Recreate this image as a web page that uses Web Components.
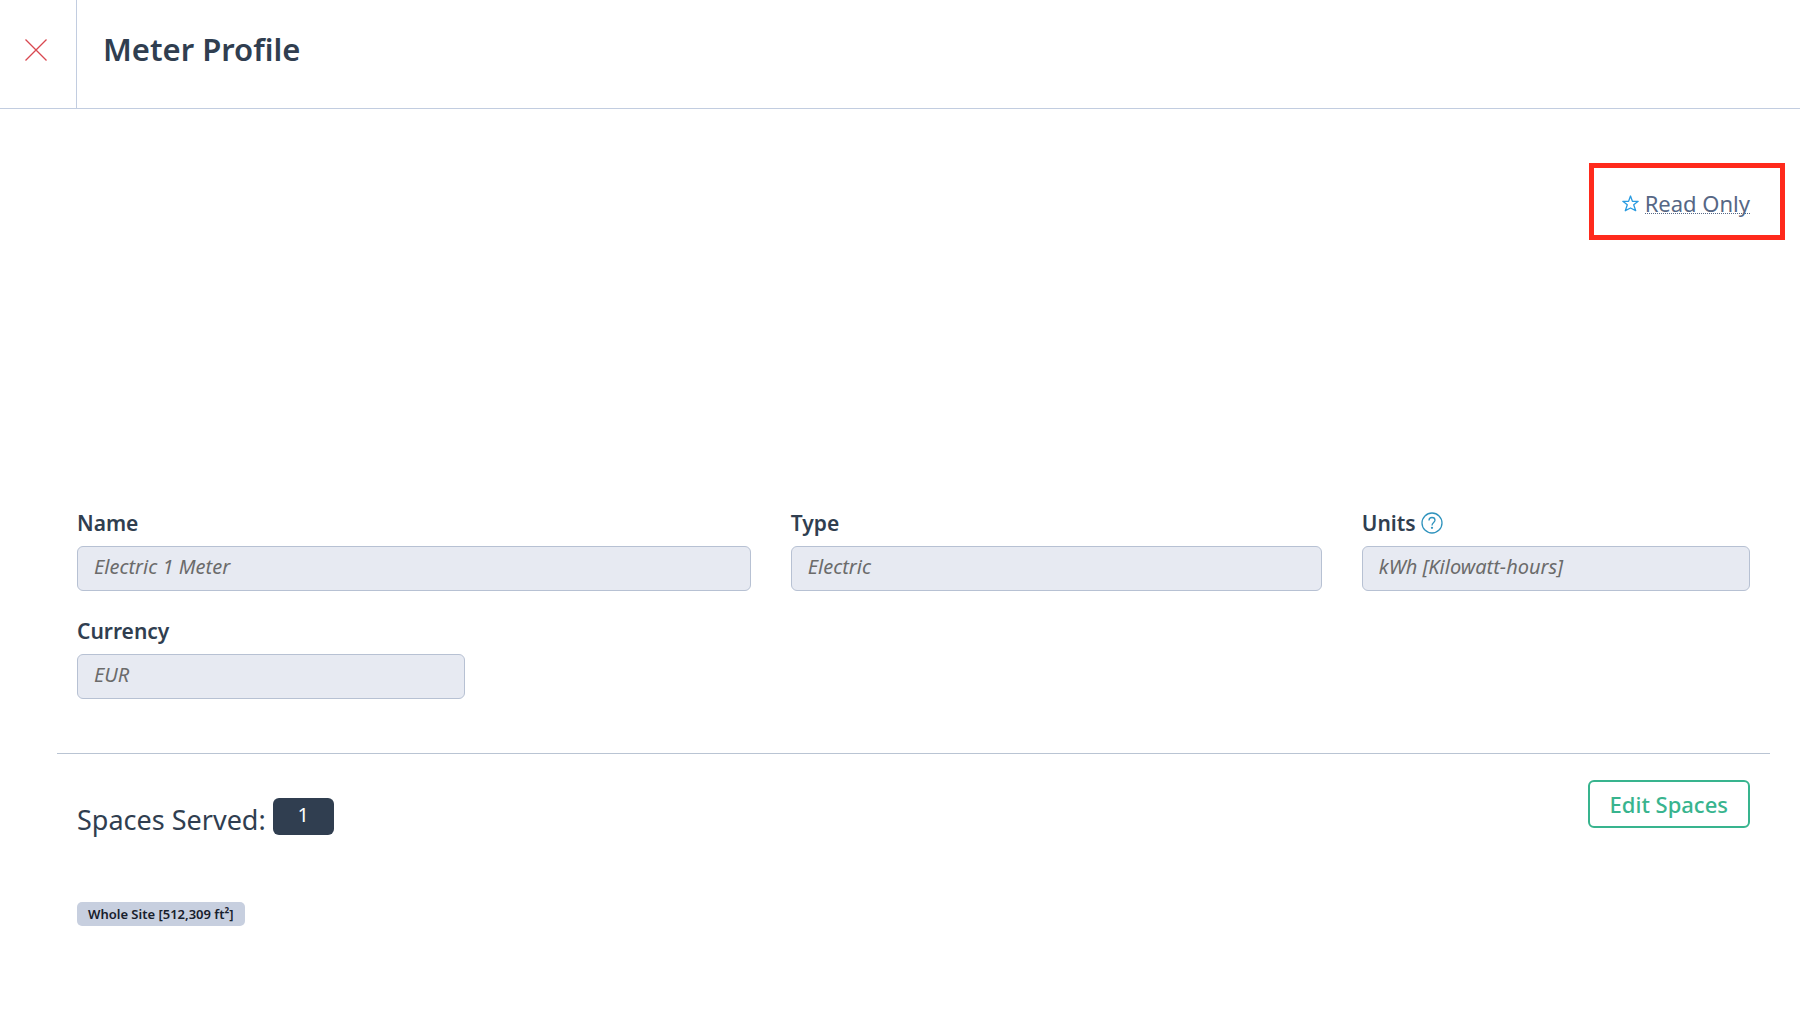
<!DOCTYPE html>
<html lang="en">
<head>
<meta charset="utf-8">
<meta name="viewport" content="width=device-width, initial-scale=1">
<title>Meter Profile</title>
<style>
  :root {
    --textColor: #303e50;
    --lineColor: #c2cde0;
    --green: #38b48e;
  }

  body {
    margin: 0;
    background-color: #fff;
    color: var(--textColor);
    font-family: 'Noto Sans', 'Open Sans', sans-serif;
  }
</style>
</head>
<body>
<meter-profile></meter-profile>

<script>
const define = (name, html, setup) => {
  const template = document.createElement('template');
  template.innerHTML = html;

  window.customElements.define(name, class extends HTMLElement {
    constructor() {
      super();
      this._shadowRoot = this.attachShadow({ mode: 'open' });
      this._shadowRoot.appendChild(template.content.cloneNode(true));
    }

    connectedCallback() {
      if (setup) setup(this, this._shadowRoot);
    }
  });
};

define('panel-header', `
  <style>
    :host {
      display: flex;
      height: 108px;
      border-bottom: 1px solid var(--lineColor);
    }

    button {
      width: 77px;
      padding: 0 4px 8px 0;
      border: 0;
      border-right: 1px solid var(--lineColor);
      background: none;
      cursor: pointer;
    }

    svg {
      display: block;
      margin: 0 auto;
    }

    h1 {
      margin: 0;
      padding: 27px 26px 0;
      font-size: 31px;
      font-weight: 600;
      line-height: 44px;
    }
  </style>
  <button type="button" aria-label="Close">
    <svg width="22" height="22" viewBox="0 0 22 22" fill="none" stroke="#d94850" stroke-width="1.3">
      <path d="M.5.5l21 21M21.5.5l-21 21"/>
    </svg>
  </button>
  <h1><slot></slot></h1>
`);

define('access-note', `
  <style>
    :host {
      display: flex;
      align-items: center;
      height: 63px;
      padding: 4px 30px 0 28px;
      border: 5px solid #ff2a1c;
    }

    svg {
      margin-right: 6px;
    }

    a {
      border-bottom: 1px dotted #566785;
      color: #566785;
      font-size: 22px;
      line-height: 20px;
      text-decoration: none;
    }
  </style>
  <svg width="17" height="17" viewBox="0 0 17 17" fill="none" stroke="#2a9be0" stroke-width="1.3" stroke-linejoin="round">
    <path d="M8.5 1l1.9 5.300h5.800l-4.500 3.400 2 6-5.200-2.700-5.200 2.700 2-6L.8 6.300h5.800z"/>
  </svg>
  <a href="#"><slot></slot></a>
`);

define('form-field', `
  <style>
    :host {
      display: block;
    }

    .label {
      display: flex;
      align-items: center;
      gap: 5px;
      height: 28px;
      margin-bottom: 9px;
    }

    label {
      font-size: 21px;
      font-weight: 600;
      line-height: 28px;
    }

    input {
      display: block;
      box-sizing: border-box;
      width: 100%;
      height: 45px;
      margin: 0;
      padding: 0 16px 4px;
      border: 1px solid #b7c1d3;
      border-radius: 6px;
      background-color: #e7eaf2;
      color: #6b6b6b;
      font: italic 20px 'Noto Sans', 'Open Sans', sans-serif;
    }
  </style>
  <div class="label"><label for="field"></label><slot></slot></div>
  <input id="field" type="text" readonly>
`, (el, root) => {
  root.querySelector('label').textContent = el.getAttribute('label');
  root.querySelector('input').value = el.getAttribute('value');
});

define('help-icon', `
  <style>
    :host {
      display: block;
      height: 22px;
    }
  </style>
  <svg width="22" height="22" viewBox="0 0 22 22" fill="none" stroke="#2f93bd" stroke-width="1.3" role="img" aria-label="Help">
    <circle cx="11" cy="11" r="10"/>
    <path d="M8 8.600C8 6.600 9.300 5.500 11 5.500s3 1.100 3 2.800c0 2.200-3 2.400-3 5.200"/>
    <circle cx="11" cy="15.800" r=".5"/>
  </svg>
`);

define('count-badge', `
  <style>
    :host {
      box-sizing: border-box;
      width: 61px;
      height: 37px;
      border-radius: 6px;
      background-color: var(--textColor);
      color: #fff;
      font-size: 20px;
      line-height: 34px;
      text-align: center;
    }
  </style>
  <slot></slot>
`);

define('space-tag', `
  <style>
    :host {
      display: inline-block;
      padding: 0 11px;
      border-radius: 5px;
      background-color: #c7cfdf;
      color: #17202c;
      font-size: 13px;
      font-weight: 600;
      line-height: 24px;
    }
  </style>
  <slot></slot>
`);

define('outline-button', `
  <style>
    :host {
      display: block;
    }

    button {
      height: 48px;
      padding: 0 20px;
      border: 2px solid var(--green);
      border-radius: 6px;
      background-color: #fff;
      color: var(--green);
      font: 500 22px 'Noto Sans', 'Open Sans', sans-serif;
      cursor: pointer;
    }
  </style>
  <button type="button"><slot></slot></button>
`);

define('meter-profile', `
  <style>
    :host {
      display: block;
    }

    main {
      padding: 54px 30px 60px 57px;
    }

    .access {
      display: flex;
      justify-content: flex-end;
      margin-right: -15px;
    }

    .fields {
      display: grid;
      grid-template-columns: repeat(12, 1fr);
      gap: 26px 40px;
      padding: 269px 20px 54px;
      border-bottom: 1px solid #b9c4d3;
    }

    .wide { grid-column: span 5; }
    .medium { grid-column: span 4; }
    .narrow { grid-column: span 3; }

    .spaces {
      display: flex;
      justify-content: space-between;
      align-items: flex-start;
      padding: 26px 20px 0;
    }

    .served {
      display: flex;
      gap: 7px;
      padding-top: 18px;
    }

    h2 {
      margin: 0;
      padding-top: 4px;
      font-size: 27px;
      font-weight: 400;
      line-height: 36px;
    }

    .tags {
      padding: 64px 20px 0;
    }
  </style>
  <panel-header>Meter Profile</panel-header>
  <main>
    <div class="access"><access-note>Read Only</access-note></div>
    <div class="fields">
      <form-field class="wide" label="Name" value="Electric 1 Meter"></form-field>
      <form-field class="medium" label="Type" value="Electric"></form-field>
      <form-field class="narrow" label="Units" value="kWh [Kilowatt-hours]"><help-icon></help-icon></form-field>
      <form-field class="narrow" label="Currency" value="EUR"></form-field>
    </div>
    <div class="spaces">
      <div class="served">
        <h2>Spaces Served:</h2>
        <count-badge>1</count-badge>
      </div>
      <outline-button>Edit Spaces</outline-button>
    </div>
    <div class="tags"><space-tag>Whole Site [512,309 ft²]</space-tag></div>
  </main>
`);
</script>
</body>
</html>
